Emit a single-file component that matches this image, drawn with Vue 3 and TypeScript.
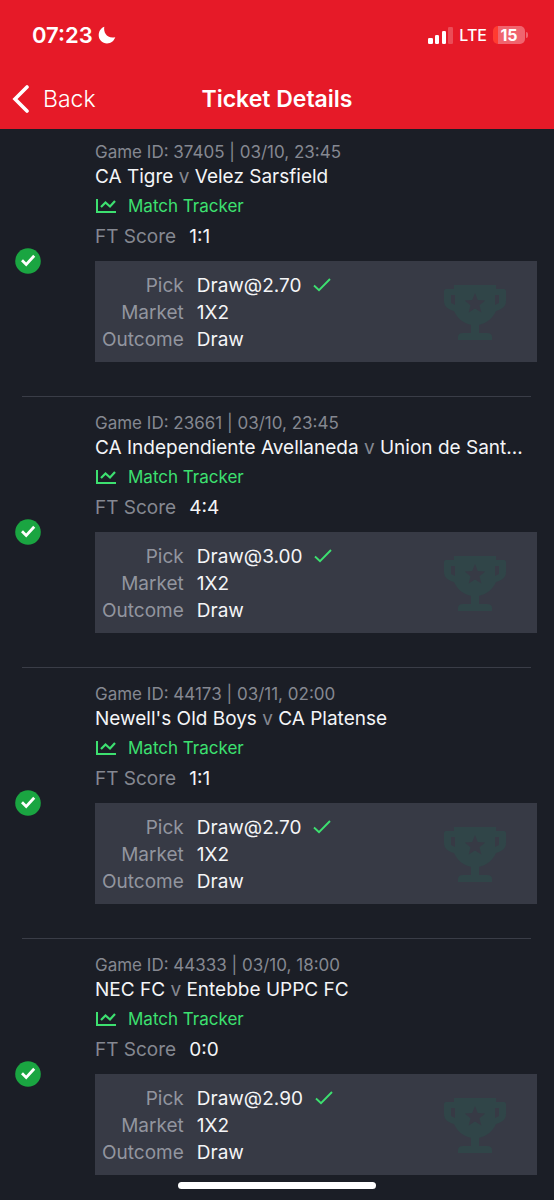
<script setup lang="ts">
interface Bet {
  id: string
  date: string
  home: string
  away: string
  score: string
  pick: string
  market: string
  outcome: string
}

const bets: Bet[] = [
  { id: '37405', date: '03/10, 23:45', home: 'CA Tigre', away: 'Velez Sarsfield', score: '1:1', pick: 'Draw@2.70', market: '1X2', outcome: 'Draw' },
  { id: '23661', date: '03/10, 23:45', home: 'CA Independiente Avellaneda', away: 'Union de Sant...', score: '4:4', pick: 'Draw@3.00', market: '1X2', outcome: 'Draw' },
  { id: '44173', date: '03/11, 02:00', home: "Newell's Old Boys", away: 'CA Platense', score: '1:1', pick: 'Draw@2.70', market: '1X2', outcome: 'Draw' },
  { id: '44333', date: '03/10, 18:00', home: 'NEC FC', away: 'Entebbe UPPC FC', score: '0:0', pick: 'Draw@2.90', market: '1X2', outcome: 'Draw' },
]
</script>

<template>
  <div class="screen">
    <header class="top">
      <div class="status">
        <div class="clock">
          <span>07:23</span>
          <svg class="moon" viewBox="0 0 18 18" aria-hidden="true">
            <path d="M6.3.7C5.2 6.4 9.2 13.2 17.3 11.2 15.9 15 12.9 17.4 9 17.4 4.3 17.4.7 13.8.7 9.2.7 5.2 2.9 1.9 6.3.7Z" fill="#fff" />
          </svg>
        </div>
        <div class="signals">
          <svg class="bars" viewBox="0 0 25 17" aria-hidden="true">
            <rect x="0" y="11" width="5" height="6" rx="1.3" fill="#fff" />
            <rect x="7" y="8" width="4" height="9" rx="1.3" fill="#fff" />
            <rect x="14" y="4" width="4" height="13" rx="1.3" fill="#fff" />
            <rect x="20" y="0" width="5" height="17" rx="1.3" fill="#fff" opacity=".22" />
          </svg>
          <span class="network">LTE</span>
          <span class="battery"><span class="level">15</span></span>
        </div>
      </div>
      <nav class="bar">
        <button class="back" type="button">
          <svg viewBox="0 0 18 28" aria-hidden="true">
            <path d="M15 2 3 14l12 12" fill="none" stroke="#fff" stroke-width="3.6" stroke-linecap="round" stroke-linejoin="miter" />
          </svg>
          <span>Back</span>
        </button>
        <h1>Ticket Details</h1>
      </nav>
    </header>

    <main class="list">
      <article v-for="bet in bets" :key="bet.id" class="bet">
        <div class="result">
          <svg class="won" viewBox="0 0 26 26" role="img" aria-label="Won">
            <circle cx="13" cy="13" r="12.8" fill="#1aa541" />
            <path d="m7 12.200 4.200 4.200 8-8.600" fill="none" stroke="#fff" stroke-width="2.8" />
          </svg>
        </div>
        <div class="info">
          <p class="meta">Game ID: {{ bet.id }} | {{ bet.date }}</p>
          <h2 class="teams">{{ bet.home }} <span>v</span> {{ bet.away }}</h2>
          <a class="tracker" href="#">
            <svg viewBox="0 0 20 14" aria-hidden="true">
              <path d="M1 0v13h19" fill="none" stroke="currentColor" stroke-width="2" />
              <path d="m5 8 4.500-4.500 4.500 4L19 2" fill="none" stroke="currentColor" stroke-width="2.2" />
            </svg>
            <span>Match Tracker</span>
          </a>
          <p class="score"><span>FT Score</span><b>{{ bet.score }}</b></p>
          <div class="card">
            <dl>
              <dt>Pick</dt>
              <dd>
                {{ bet.pick }}
                <svg class="tick" viewBox="0 0 18 14" aria-hidden="true">
                  <path d="m1 6.500 5 4.700L17 0" fill="none" stroke="currentColor" stroke-width="1.9" />
                </svg>
              </dd>
              <dt>Market</dt>
              <dd>{{ bet.market }}</dd>
              <dt>Outcome</dt>
              <dd>{{ bet.outcome }}</dd>
            </dl>
            <svg class="cup" viewBox="0 0 62 56" aria-hidden="true">
              <path
                fill="#304548"
                fill-rule="evenodd"
                d="M10 0h42v4h8q2 0 2 2v10c0 5-3 8-10 10-3 7-9 12-17 14v8h8q5 0 5 4v3H14v-3q0-4 5-4h8v-8c-8-2-14-7-17-14C3 24 0 21 0 16V6q0-2 2-2h8ZM7 10v8l4 2V10ZM55 10h-4v10l4-2ZM31 8l-2.800 6.900-7.400.6 5.700 4.800-1.800 7.200L31 23.600l6.300 3.900-1.800-7.200 5.700-4.800-7.400-.6Z"
              />
            </svg>
          </div>
        </div>
      </article>
    </main>
    <div class="home-indicator"></div>
  </div>
</template>

<style>
body {
  margin: 0;
  background: #1b1e26;
}
</style>

<style scoped>
.screen {
  min-height: 100vh;
  background: #1b1e26;
  color: #f4f5f7;
  font-family: Inter, "Liberation Sans", sans-serif;
  font-size: 19px;
}

.screen * {
  box-sizing: border-box;
}

h1, h2, p, dl, dd {
  margin: 0;
  font-weight: 400;
}

.top {
  position: relative;
  z-index: 1;
  background: #e61a28;
  color: #fff;
}

.status {
  display: flex;
  justify-content: space-between;
  align-items: center;
  height: 70px;
  padding: 0 29px 0 32px;
}

.clock {
  display: flex;
  align-items: center;
  gap: 5px;
  font-size: 22px;
  font-weight: 600;
}

.moon {
  width: 18px;
  height: 18px;
}

.signals {
  display: flex;
  align-items: center;
  gap: 6px;
}

.bars {
  width: 25px;
  height: 17px;
}

.network {
  font-size: 16px;
  font-weight: 500;
}

.battery {
  position: relative;
  width: 32px;
  height: 18px;
  border-radius: 5px;
  background: linear-gradient(90deg, #ff3b30 15%, #f0646e 15%);
  font-size: 16px;
  font-weight: 700;
  line-height: 18px;
  text-align: center;
}

.battery::after {
  content: "";
  position: absolute;
  top: 6px;
  right: -3px;
  width: 2px;
  height: 6px;
  border-radius: 0 2px 2px 0;
  background: #f0646e;
}

.bar {
  display: grid;
  grid-template-columns: 1fr auto 1fr;
  align-items: center;
  height: 59px;
  padding: 0 12px 2px;
}

.back {
  display: flex;
  align-items: center;
  justify-self: start;
  gap: 13px;
  padding: 0;
  border: 0;
  background: none;
  color: #fff;
  font: inherit;
  font-size: 23px;
  font-weight: 300;
}

.back svg {
  width: 18px;
  height: 28px;
}

h1 {
  font-size: 23px;
  font-weight: 600;
}

.list {
  margin-top: -3px;
}

.bet {
  position: relative;
  display: flex;
}

.bet + .bet {
  border-top: 1px solid transparent;
}

.bet:not(:last-child)::after {
  content: "";
  position: absolute;
  left: 22px;
  right: 23px;
  bottom: -1px;
  height: 1px;
  background: #3a3d47;
}

.result {
  display: flex;
  flex: none;
  align-items: center;
  width: 95px;
  padding-left: 15px;
}

.won {
  width: 26px;
  height: 26px;
}

.info {
  flex: 1;
  min-width: 0;
  padding: 14px 17px 34px 0;
}

.meta {
  color: #858891;
  font-size: 17px;
  line-height: 24px;
}

.teams {
  overflow: hidden;
  line-height: 26px;
  font-size: 19px;
  text-overflow: ellipsis;
  white-space: nowrap;
}

.teams span {
  color: #858891;
}

.tracker {
  display: flex;
  align-items: center;
  gap: 12px;
  height: 32px;
  padding-left: 1px;
  color: #3de070;
  font-size: 17px;
  text-decoration: none;
}

.tracker svg {
  width: 20px;
  height: 14px;
}

.score {
  display: flex;
  gap: 13px;
  line-height: 29px;
}

.score span {
  color: #858891;
}

.score b {
  font-weight: 400;
}

.card {
  display: flex;
  justify-content: space-between;
  align-items: center;
  margin-top: 10px;
  padding: 11px 31px 9px 7px;
  background: #373a45;
}

dl {
  display: grid;
  grid-template-columns: auto auto;
  column-gap: 13px;
  line-height: 27px;
}

dt {
  color: #92959f;
  text-align: right;
}

dd {
  display: flex;
  align-items: center;
  gap: 12px;
}

.tick {
  overflow: visible;
  width: 18px;
  height: 14px;
  color: #3de070;
}

.cup {
  width: 62px;
  height: 56px;
}

.home-indicator {
  position: fixed;
  bottom: 11px;
  left: 50%;
  width: 198px;
  height: 7px;
  border-radius: 4px;
  background: #fff;
  transform: translateX(-50%);
}
</style>
